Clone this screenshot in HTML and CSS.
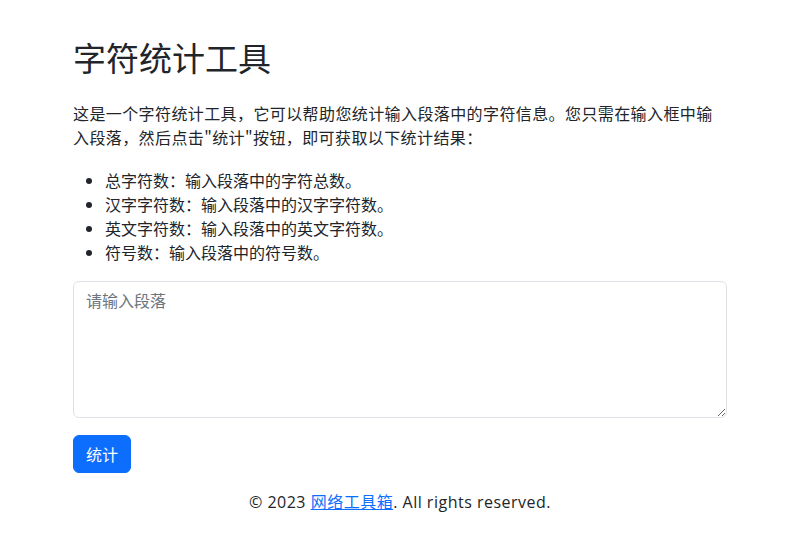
FILE: index.html
```html
<!DOCTYPE html>
<html lang="zh-CN">
<head>
<meta charset="utf-8">
<title>字符统计工具</title>
<link rel="stylesheet" href="styles.css">
</head>
<body>
<main class="container">
  <h1 class="title">字符统计工具</h1>
  <p class="intro">这是一个字符统计工具，它可以帮助您统计输入段落中的字符信息。您只需在输入框中输入段落，然后点击"统计"按钮，即可获取以下统计结果：</p>
  <ul class="list">
    <li>总字符数：输入段落中的字符总数。</li>
    <li>汉字字符数：输入段落中的汉字字符数。</li>
    <li>英文字符数：输入段落中的英文字符数。</li>
    <li>符号数：输入段落中的符号数。</li>
  </ul>
  <textarea class="input" placeholder="请输入段落"></textarea>
  <button class="btn" type="button">统计</button>
  <footer class="footer">© 2023 <a href="#" class="link">网络工具箱</a>. All rights reserved.</footer>
</main>
</body>
</html>
```

FILE: styles.css
```css
* { box-sizing: border-box; }
html, body { margin: 0; padding: 0; background: #fff; }
body {
  font-family: "Noto Sans CJK SC", "Noto Sans", sans-serif;
  font-size: 16px;
  line-height: 1.5;
  color: #212529;
  text-spacing-trim: space-all;
}
.container {
  width: 654px;
  margin: 0 auto;
  padding-top: 37px;
  display: flex;
  flex-direction: column;
  align-items: flex-start;
}
.title {
  font-size: 33px;
  font-weight: 400;
  line-height: 40px;
  margin: 0 0 24px;
}
.intro { margin: 0 0 19px; width: 100%; letter-spacing: 0.4px; }
.list { margin: 0 0 17px; padding-left: 32px; }
.list li { line-height: 24px; }
.input {
  display: block;
  width: 100%;
  height: 137px;
  margin: 0;
  padding: 6px 12px;
  font: inherit;
  line-height: 24px;
  color: #212529;
  border: 1px solid #dee2e6;
  border-radius: 6px;
  resize: vertical;
  outline: none;
}
.input::placeholder { color: #6c757d; opacity: 1; }
.btn {
  margin-top: 17px;
  height: 38px;
  padding: 6px 12px;
  font: inherit;
  line-height: 24px;
  color: #fff;
  background: #0d6efd;
  border: 1px solid #0d6efd;
  border-radius: 6px;
  cursor: pointer;
}
.footer {
  align-self: stretch;
  text-align: center;
  margin-top: 17px;
  line-height: 24px;
  letter-spacing: 0.5px;
  font-family: "Open Sans", "Noto Sans CJK SC", sans-serif;
}
.link { color: #0d6efd; text-decoration: underline; }
```
